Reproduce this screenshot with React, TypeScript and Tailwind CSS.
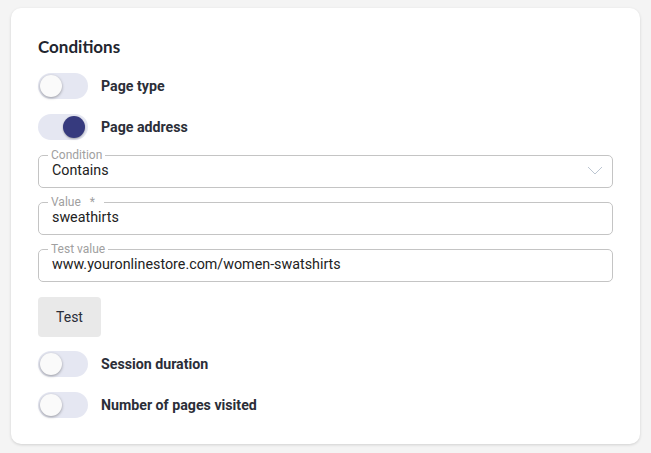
import React, { useState } from "react"

function Toggle({ on, label }: { on?: boolean; label: string }) {
  return (
    <div className="flex items-center h-[26px]">
      <div className="relative w-[50px] h-[26px] rounded-full bg-[#e5e7f2] shrink-0">
        <div
          className={
            on
              ? "absolute top-[2px] left-[25px] w-[22px] h-[22px] rounded-full bg-[#363a7e] shadow-[0_1px_2px_rgba(0,0,0,0.3)]"
              : "absolute top-[2px] left-[2px] w-[22px] h-[22px] rounded-full bg-[#fafafa] shadow-[0_1px_3px_rgba(0,0,0,0.35)]"
          }
        />
      </div>
      <span className="ml-[13px] text-[14.2px] leading-[18px] font-bold text-[#2b2e38]">{label}</span>
    </div>
  )
}

function Field({
  label,
  value,
  required,
  select,
}: {
  label: string
  value: string
  required?: boolean
  select?: boolean
}) {
  return (
    <fieldset className="border border-[#c4c4c4] rounded-[5px] px-[13px]">
      <legend className="ml-[-4px] px-[3px] text-[12px] leading-[14px] text-[#a0a0a0]">
        {label}
        {required && <span className="ml-[9px] mr-[6px]">*</span>}
      </legend>
      <div className="flex items-start h-[25px] pb-[9px]">
        <span className="flex-1 text-[14.3px] leading-[16px] text-[#222]">{value}</span>
        {select && (
          <svg width="16" height="9" viewBox="0 0 16 9" className="mr-[-4px] mt-[4px]">
            <path d="M1 1 L8 8 L15 1" fill="none" stroke="#bcc6d2" strokeWidth="1" />
          </svg>
        )}
      </div>
    </fieldset>
  )
}

export default function App() {
  const [value] = useState("sweathirts")
  return (
    <div className="min-h-[453px] bg-[#f4f4f4] pt-[8px] px-[11px] pb-[9px] font-['Roboto',sans-serif]">
      <div className="bg-white rounded-[10px] shadow-[0_1px_3px_rgba(0,0,0,0.15)] px-[27px] pt-[27px] pb-[26px] flex flex-col">
        <h2 className="font-['Lato',sans-serif] text-[17px] font-bold leading-[24px] text-[#22252f]">
          Conditions
        </h2>
        <div className="mt-[14px] flex flex-col gap-[15px]">
          <Toggle label="Page type" />
          <Toggle on label="Page address" />
        </div>
        <div className="mt-[8px] flex flex-col gap-[7px]">
          <Field label="Condition" value="Contains" select />
          <Field label="Value" value={value} required />
          <Field label="Test value" value="www.youronlinestore.com/women-swatshirts" />
        </div>
        <button className="mt-[15px] w-[63px] h-[40px] rounded-[4px] bg-[#e9e9e9] text-[14px] text-[#2b2e38]">
          Test
        </button>
        <div className="mt-[14px] flex flex-col gap-[15px]">
          <Toggle label="Session duration" />
          <Toggle label="Number of pages visited" />
        </div>
      </div>
    </div>
  )
}
